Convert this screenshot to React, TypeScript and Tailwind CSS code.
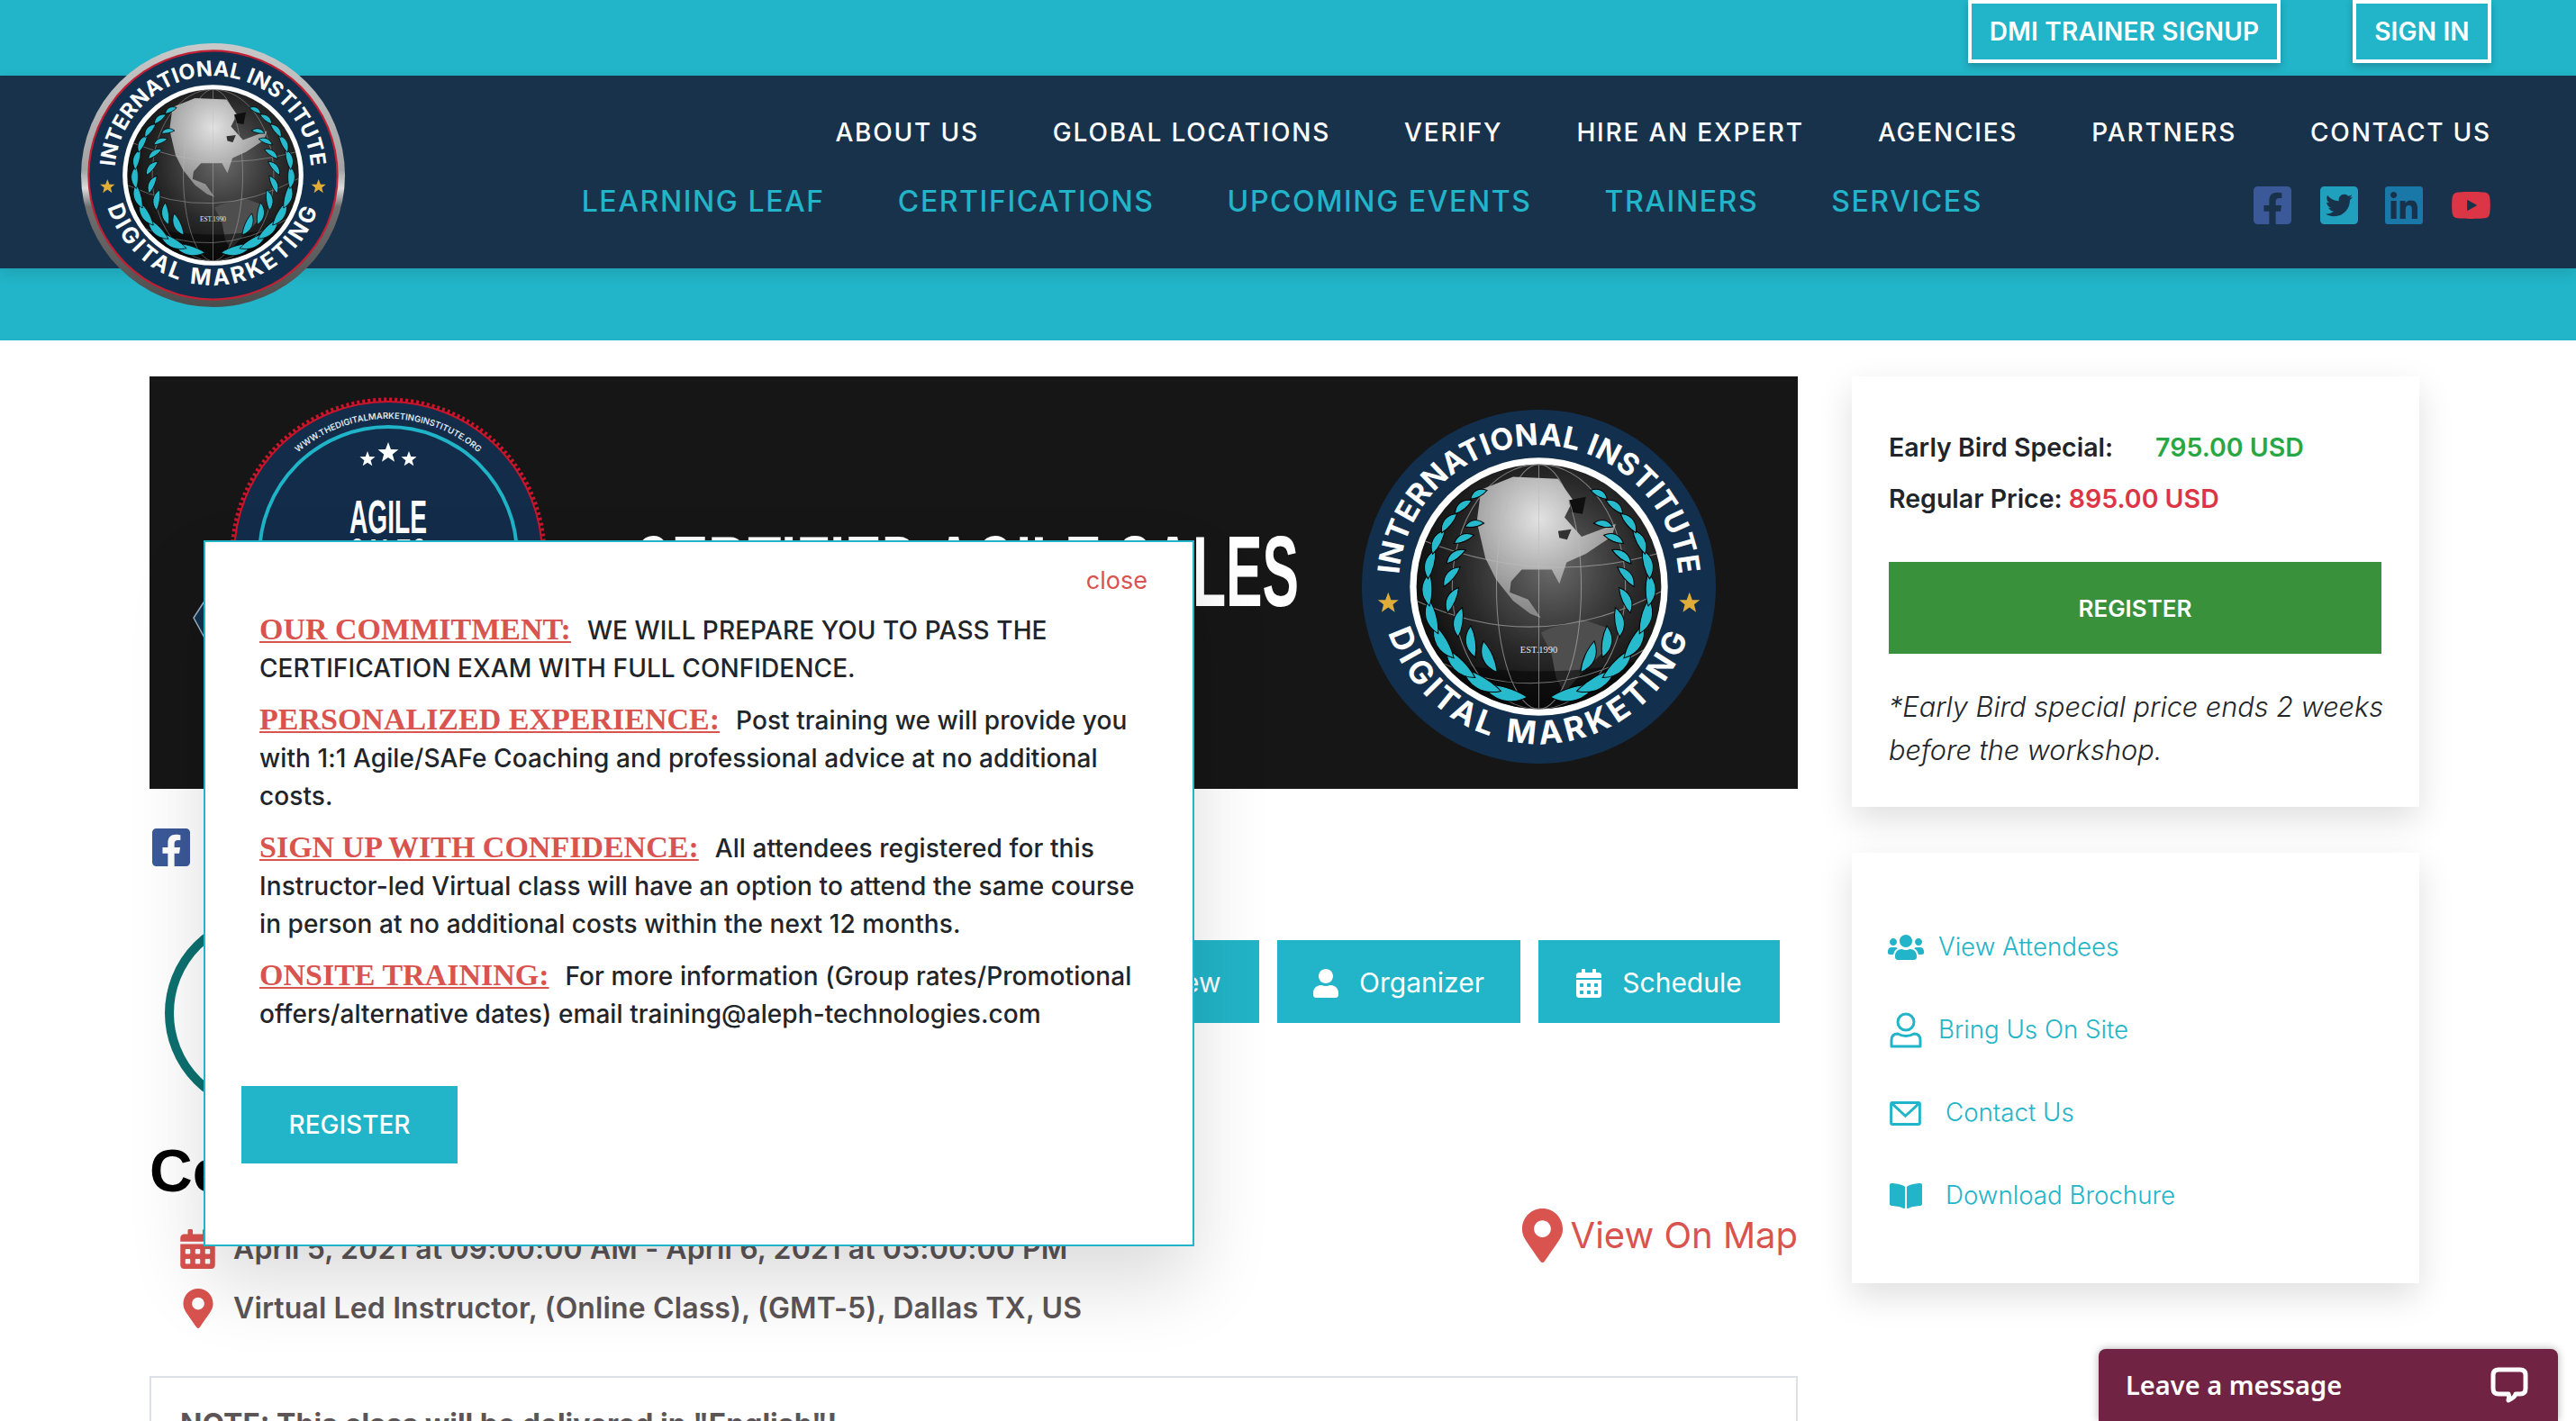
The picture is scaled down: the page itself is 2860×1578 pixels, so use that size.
import { FaFacebookSquare, FaTwitterSquare, FaLinkedin, FaYoutube, FaUser, FaUsers, FaCalendarAlt, FaMapMarkerAlt, FaBookOpen, FaListAlt } from "react-icons/fa";
import type { ReactNode } from "react";

const topLinks = ["ABOUT US", "GLOBAL LOCATIONS", "VERIFY", "HIRE AN EXPERT", "AGENCIES", "PARTNERS", "CONTACT US"];
const mainLinks = ["LEARNING LEAF", "CERTIFICATIONS", "UPCOMING EVENTS", "TRAINERS", "SERVICES"];

const outerLeaves = [6, 20, 35, 50, 65, 80, 94, 107, 119, 131, 142];
const innerLeaves = [26, 42, 58, 74, 90, 104, 117, 129];

function leafPath(len: number, wide: number) {
  return `M0 0 C${len * 0.3} ${-wide} ${len * 0.7} ${-wide} ${len} 0 C${len * 0.7} ${wide * 0.35} ${len * 0.3} ${wide * 0.35} 0 0Z`;
}

function Laurel() {
  const branch = (
    <g>
      {innerLeaves.map((t, i) => {
        const rad = (t * Math.PI) / 180;
        const len = 36 - i * 2.2;
        return (
          <path
            key={t}
            d={leafPath(len, 11 - i * 0.6)}
            fill="#27b9cc"
            stroke="#000"
            strokeWidth="1"
            transform={`translate(${-101 * Math.sin(rad)} ${101 * Math.cos(rad)}) rotate(${t + 180 + 40})`}
          />
        );
      })}
      {outerLeaves.map((t, i) => {
        const rad = (t * Math.PI) / 180;
        const len = 50 - i * 3;
        return (
          <path
            key={t}
            d={leafPath(len, 14 - i * 0.7)}
            fill="#27b9cc"
            stroke="#000"
            strokeWidth="1"
            transform={`translate(${-118 * Math.sin(rad)} ${118 * Math.cos(rad)}) rotate(${t + 180 + 10})`}
          />
        );
      })}
    </g>
  );
  return (
    <g transform="translate(200 200)">
      {branch}
      <g transform="scale(-1 1)">{branch}</g>
    </g>
  );
}

// round seal, drawn on a 400 box; the banner copy crops off the silver rim
function Seal({ id, rim }: { id: string; rim: boolean }) {
  return (
    <>
      <defs>
        <linearGradient id={`${id}-rim`} x1="0" y1="0" x2="0" y2="1">
          <stop offset="0" stopColor="#c9c9c9" />
          <stop offset="0.48" stopColor="#a3a3a3" />
          <stop offset="0.55" stopColor="#dcdcdc" />
          <stop offset="0.62" stopColor="#6f6f6f" />
          <stop offset="1" stopColor="#4c4c4c" />
        </linearGradient>
        <radialGradient id={`${id}-land`} cx="0.45" cy="0.3" r="0.65">
          <stop offset="0" stopColor="#e2e2e2" />
          <stop offset="1" stopColor="#8a8a8a" />
        </radialGradient>
        <radialGradient id={`${id}-sea`} cx="0.55" cy="0.42" r="0.65">
          <stop offset="0" stopColor="#6a6a6a" />
          <stop offset="0.55" stopColor="#2a2a2a" />
          <stop offset="1" stopColor="#050505" />
        </radialGradient>
        <clipPath id={`${id}-globe`}>
          <circle cx="200" cy="200" r="130" />
        </clipPath>
        <path id={`${id}-top`} d="M52 216 A149 149 0 1 1 348 216" />
        <path id={`${id}-bot`} d="M33 200 A167 167 0 0 0 367 200" />
      </defs>
      {rim && <circle cx="200" cy="200" r="200" fill={`url(#${id}-rim)`} />}
      {rim && <circle cx="200" cy="200" r="190" fill="#c11f34" />}
      <circle cx="200" cy="200" r={rim ? 187 : 188} fill="#12304e" />
      <circle cx="200" cy="200" r="137" fill="#fff" />
      <circle cx="200" cy="200" r="130" fill={`url(#${id}-sea)`} />
      <g clipPath={`url(#${id}-globe)`}>
        <g transform="translate(200 200) scale(0.4545) translate(-530 -492)">
          <path
            d="M395 265 L470 235 L575 240 L610 290 L590 330 L630 375 L710 345 L700 375 L640 415 L595 435 L578 485 L560 452 L490 452 L465 480 L462 505 L505 522 L535 565 L510 555 L470 525 L430 475 L405 425 L385 340Z"
            fill={`url(#${id}-land)`}
          />
          <path d="M555 590 L630 568 L695 590 L685 640 L625 700 L590 740 L570 705 L560 650 L535 600Z" fill="#4f4f4f" />
          <path d="M600 290 L640 282 L632 322 L606 318Z" fill="#101010" />
          <path d="M575 362 L606 358 L596 382 L578 378Z" fill="#333" />
        </g>
        <path d="M0 250 Q200 330 400 250 L400 400 L0 400Z" fill="#050505" opacity="0.55" />
        <g fill="none" stroke="#bdbdbd" strokeWidth="1" opacity="0.6">
          <ellipse cx="200" cy="200" rx="45" ry="130" />
          <ellipse cx="200" cy="200" rx="92" ry="130" />
          <path d="M75 150 Q200 200 325 165" />
          <path d="M70 215 Q200 275 330 205" />
          <path d="M85 275 Q200 335 315 265" />
          <path d="M200 70 L200 330" />
        </g>
        <Laurel />
      </g>
      <text x="200" y="270" textAnchor="middle" fontSize="10" fill="#e8e8e8" fontFamily="Liberation Serif, serif">
        EST.1990
      </text>
      <text fontSize="32" fontWeight="700" fill="#fff" fontFamily="Inter, sans-serif" letterSpacing="0.2">
        <textPath href={`#${id}-top`} startOffset="50%" textAnchor="middle">
          INTERNATIONAL INSTITUTE
        </textPath>
      </text>
      <text fontSize="34" fontWeight="700" fill="#fff" fontFamily="Inter, sans-serif" letterSpacing="4.5">
        <textPath href={`#${id}-bot`} startOffset="50%" textAnchor="middle">
          DIGITAL MARKETING
        </textPath>
      </text>
      <polygon points="40,206 43,214 51,214 45,219 47,227 40,222 33,227 35,219 29,214 37,214" fill="#e0ad3a" />
      <polygon points="360,206 363,214 371,214 365,219 367,227 360,222 353,227 355,219 349,214 357,214" fill="#e0ad3a" />
    </>
  );
}

function Star({ x, y, r }: { x: number; y: number; r: number }) {
  const pts = [];
  for (let i = 0; i < 10; i++) {
    const a = (i * Math.PI) / 5 - Math.PI / 2;
    const d = i % 2 ? r * 0.42 : r;
    pts.push(`${x + d * Math.cos(a)},${y + d * Math.sin(a)}`);
  }
  return <polygon points={pts.join(" ")} fill="#fff" />;
}

function Banner() {
  return (
    <svg viewBox="0 0 1830 458" className="block w-[1830px] h-[458px]">
      <rect width="1830" height="458" fill="#161616" />
      <polygon points="62,248 49,268 62,292" fill="#14324f" stroke="#9fb3c4" strokeWidth="1.5" />
      <circle cx="265" cy="199" r="173" fill="none" stroke="#c8152c" strokeWidth="5" strokeDasharray="3 3" />
      <circle cx="265" cy="199" r="171" fill="#132c4a" stroke="#c8152c" strokeWidth="2" />
      <circle cx="265" cy="199" r="143" fill="none" stroke="#1fb4c7" strokeWidth="4" />
      <defs>
        <path id="badge-arc" d="M113 199 A152 152 0 0 1 417 199" />
      </defs>
      <text fontSize="9.5" fontWeight="600" fill="#dfe7ee" fontFamily="Inter, sans-serif">
        <textPath href="#badge-arc" startOffset="50%" textAnchor="middle">
          WWW.THEDIGITALMARKETINGINSTITUTE.ORG
        </textPath>
      </text>
      <Star x={265} y={85} r={12} />
      <Star x={242} y={92} r={9} />
      <Star x={288} y={92} r={9} />
      <text x="222" y="174" fontSize="52" fontWeight="700" fill="#fff" textLength="86" lengthAdjust="spacingAndGlyphs" fontFamily="Liberation Sans, sans-serif">
        AGILE
      </text>
      <text x="222" y="232" fontSize="75" fontWeight="700" fill="#fff" textLength="86" lengthAdjust="spacingAndGlyphs" fontFamily="Liberation Sans, sans-serif">
        SALES
      </text>
      <text x="536" y="255" fontSize="112" fontWeight="700" fill="#fff" textLength="740" lengthAdjust="spacingAndGlyphs" fontFamily="Liberation Sans, sans-serif">
        CERTIFIED AGILE SALES
      </text>
      <svg x="1346" y="37" width="393" height="393" viewBox="12 12 376 376">
        <Seal id="banner" rim={false} />
      </svg>
    </svg>
  );
}

function OutlineUser() {
  return (
    <svg viewBox="0 0 36 40" className="w-[36px] h-[40px]" fill="none" stroke="#22b4c8" strokeWidth="3">
      <circle cx="18" cy="11" r="9" />
      <path d="M2 38 V31 Q2 24 9 24 Q18 29 27 24 Q34 24 34 31 V38Z" strokeLinejoin="round" />
    </svg>
  );
}

function OutlineMail() {
  return (
    <svg viewBox="0 0 36 28" className="w-[35px] h-[27px]" fill="none" stroke="#22b4c8" strokeWidth="3">
      <rect x="1.5" y="1.5" width="33" height="25" rx="1.5" />
      <path d="M3 3 L18 17 L33 3" />
    </svg>
  );
}

function SectionLine({ title, children }: { title: string; children: ReactNode }) {
  return (
    <p className="mb-[15px] text-[28px] tracking-[0.08px] leading-[42px] font-medium text-[#212529]">
      <span className="font-['Liberation_Serif',serif] text-[34px] tracking-normal font-bold leading-[42px] text-[#d9534f] underline decoration-2 underline-offset-2 mr-[18px]">
        {title}
      </span>
      {children}
    </p>
  );
}

function Modal() {
  return (
    <div className="absolute left-[226px] top-[600px] w-[1100px] h-[784px] bg-white border-2 border-[#22b4c8] shadow-[0_40px_80px_rgba(0,0,0,0.14)]">
      <div className="flex justify-end pr-[50px] pt-[27px] h-[76px]">
        <span className="text-[27px] leading-[32px] text-[#d9534f]">close</span>
      </div>
      <div className="pl-[60px] pr-[20px]">
        <SectionLine title="OUR COMMITMENT:">
          WE WILL PREPARE YOU TO PASS THE
          <br />
          CERTIFICATION EXAM WITH FULL CONFIDENCE.
        </SectionLine>
        <SectionLine title="PERSONALIZED EXPERIENCE:">
          Post training we will provide you
          <br />
          with 1:1 Agile/SAFe Coaching and professional advice at no additional
          <br />
          costs.
        </SectionLine>
        <SectionLine title="SIGN UP WITH CONFIDENCE:">
          All attendees registered for this
          <br />
          Instructor-led Virtual class will have an option to attend the same course
          <br />
          in person at no additional costs within the next 12 months.
        </SectionLine>
        <SectionLine title="ONSITE TRAINING:">
          For more information (Group rates/Promotional
          <br />
          offers/alternative dates) email training@aleph-technologies.com
        </SectionLine>
      </div>
      <button className="ml-[40px] mt-[44px] w-[240px] h-[86px] bg-[#22b4c8] text-white text-[28px] font-medium">REGISTER</button>
    </div>
  );
}

function TabButton({ icon, label, width }: { icon: ReactNode; label: string; width: string }) {
  return (
    <div className={`${width} h-[92px] pt-[3px] bg-[#22b4c8] text-white flex items-center justify-center gap-[23px] text-[30px] font-normal`}>
      {icon}
      <span>{label}</span>
    </div>
  );
}

export default function App() {
  return (
    <div className="relative w-[2860px] h-[1578px] overflow-hidden bg-white font-['Inter',sans-serif]">
      <header>
        <div className="h-[84px] bg-[#22b4c8] flex justify-end items-start gap-[80px] pr-[94px]">
          <a className="h-[70px] w-[347px] border-4 border-white flex items-center justify-center text-white text-[28px] tracking-[0.2px] font-semibold shadow-[0_4px_8px_rgba(0,0,0,0.2)]">
            DMI TRAINER SIGNUP
          </a>
          <a className="h-[70px] w-[154px] border-4 border-white flex items-center justify-center text-white text-[28px] tracking-[0.2px] font-semibold shadow-[0_4px_8px_rgba(0,0,0,0.2)]">
            SIGN IN
          </a>
        </div>
        <div className="relative z-10 h-[214px] bg-[#19324c] pt-[46px] pr-[94px] shadow-[0_6px_14px_rgba(0,0,0,0.1)]">
          <nav className="flex justify-end gap-[82px] h-[34px] items-center text-white text-[28px] font-medium tracking-[1.8px]">
            {topLinks.map((l) => (
              <a key={l}>{l}</a>
            ))}
          </nav>
          <div className="flex justify-end items-center mt-[40px] h-[40px]">
            <nav className="flex gap-[81px] text-[#22b4c8] text-[32px] font-medium tracking-[1.6px]">
              {mainLinks.map((l) => (
                <a key={l}>{l}</a>
              ))}
            </nav>
            <div className="flex items-center ml-[301px] mt-[7px]">
              <FaFacebookSquare className="w-[42px] h-[48px] text-[#3b5998]" />
              <FaTwitterSquare className="w-[42px] h-[48px] text-[#21a0bd] ml-[32px]" />
              <FaLinkedin className="w-[42px] h-[48px] text-[#1a78a8] ml-[30px]" />
              <FaYoutube className="w-[45px] h-[40px] text-[#dc3545] ml-[31px]" />
            </div>
          </div>
        </div>
        <div className="h-[80px] bg-[#22b4c8]" />
      </header>

      <main className="flex pt-[40px] pl-[166px] gap-[60px] items-start">
        <section className="w-[1830px]">
          <Banner />
          <div className="mt-[45px] h-[40px] flex items-center">
            <FaFacebookSquare className="w-[42px] h-[48px] ml-[3px] text-[#3b5998]" />
          </div>
          <div className="mt-[49px] h-[230px] flex justify-between items-start pl-[17px] pr-[20px]">
            <div className="w-[222px] h-[222px] mt-[4px] rounded-full border-[10px] border-[#0d7170]" />
            <div className="flex gap-[20px] mt-[34px]">
              <TabButton icon={<FaListAlt className="w-[28px] h-[32px]" />} label="Overview" width="w-[270px]" />
              <TabButton icon={<FaUser className="w-[28px] h-[32px]" />} label="Organizer" width="w-[270px]" />
              <TabButton icon={<FaCalendarAlt className="w-[28px] h-[32px]" />} label="Schedule" width="w-[268px]" />
            </div>
          </div>
          <h1 className="mt-[22px] text-[66px] leading-[76px] font-bold text-black font-['Liberation_Sans',sans-serif]">Certified Agile Sales</h1>
          <div className="flex justify-between items-start">
            <div className="mt-[27px] pl-[34px] text-[32px] tracking-[0.12px] leading-[44px] font-semibold text-[#5c5557]">
              <div className="flex items-center gap-[20px] h-[44px]">
                <FaCalendarAlt className="w-[39px] h-[44px] text-[#d9534f]" />
                <span>April 5, 2021 at 09:00:00 AM - April 6, 2021 at 05:00:00 PM</span>
              </div>
              <div className="flex items-center gap-[22px] h-[44px] mt-[22px] pl-[3px]">
                <FaMapMarkerAlt className="w-[34px] h-[44px] text-[#d9534f]" />
                <span>Virtual Led Instructor, (Online Class), (GMT-5), Dallas TX, US</span>
              </div>
            </div>
            <a className="flex items-center gap-[9px] mt-[4px] text-[40px] leading-[60px] text-[#d9534f]">
              <FaMapMarkerAlt className="w-[45px] h-[60px]" />
              View On Map
            </a>
          </div>
          <div className="mt-[53px] border-2 border-[#dee2e6] px-[32px] pt-[30px] pb-[40px]">
            <p className="text-[32px] leading-[44px] font-bold text-[#5c5557]">NOTE: This class will be delivered in "English"!</p>
          </div>
        </section>

        <aside className="w-[630px]">
          <div className="bg-white pt-[50px] pl-[41px] pr-[42px] pb-[39px] shadow-[0_14px_36px_rgba(0,0,0,0.13)]">
            <div className="text-[28.5px] leading-[57px] font-semibold text-[#212529]">
              <div>
                Early Bird Special:<span className="ml-[47px] text-[#28a745]">795.00 USD</span>
              </div>
              <div>
                Regular Price: <span className="text-[#dc3545]">895.00 USD</span>
              </div>
            </div>
            <button className="mt-[42px] w-full h-[102px] bg-[#3a913c] text-white text-[26px] font-semibold">REGISTER</button>
            <p className="mt-[35px] text-[30.7px] leading-[48px] italic font-light text-[#212529] whitespace-nowrap">
              *Early Bird special price ends 2 weeks
              <br />
              before the workshop.
            </p>
          </div>
          <div className="mt-[51px] bg-white pt-[59px] pb-[51px] pl-[40px] shadow-[0_14px_36px_rgba(0,0,0,0.13)] text-[#22b4c8] text-[27.7px] font-light">
            <a className="h-[92px] flex items-center gap-[16px]">
              <FaUsers className="w-[40px] h-[32px]" />
              View Attendees
            </a>
            <a className="h-[92px] flex items-center gap-[18px] pl-[2px]">
              <OutlineUser />
              Bring Us On Site
            </a>
            <a className="h-[92px] flex items-center gap-[27px] pl-[2px]">
              <OutlineMail />
              Contact Us
            </a>
            <a className="h-[92px] flex items-center gap-[24px]">
              <FaBookOpen className="w-[40px] h-[32px]" />
              Download Brochure
            </a>
          </div>
        </aside>
      </main>

      <svg viewBox="0 0 400 400" className="absolute left-[90px] top-[48px] z-20 w-[293px] h-[293px]">
        <Seal id="head" rim />
      </svg>

      <Modal />

      <div className="absolute left-[2330px] top-[1498px] w-[510px] h-[80px] rounded-t-[8px] bg-[#702342] flex items-center justify-between pl-[30px] pr-[33px] text-white text-[29px] font-semibold font-['Noto_Sans',sans-serif] shadow-[0_0_10px_rgba(0,0,0,0.3)]">
        <span>Leave a message</span>
        <svg viewBox="0 0 42 40" className="w-[42px] h-[40px]" fill="none" stroke="#fff" strokeWidth="5" strokeLinejoin="round">
          <path d="M9 3 H33 Q39 3 39 9 V24 Q39 30 33 30 H28 Q27 34 20 37 Q21 32 20 30 H9 Q3 30 3 24 V9 Q3 3 9 3Z" />
        </svg>
      </div>
    </div>
  );
}
